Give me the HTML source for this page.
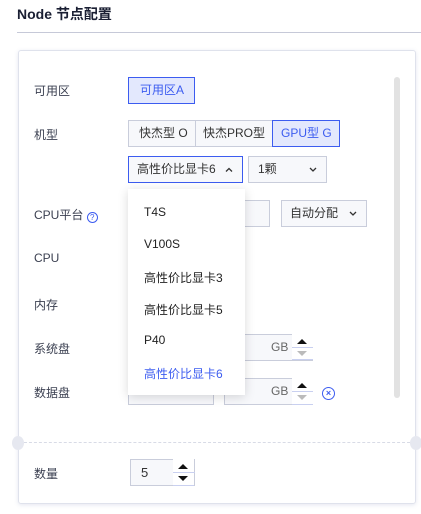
<!DOCTYPE html>
<html><head><meta charset="utf-8"><style>
*{box-sizing:border-box;margin:0;padding:0}
body{width:421px;height:514px;background:#fff;font-family:"Liberation Sans","Noto Sans CJK SC",sans-serif;font-size:12px;color:#333;position:relative;overflow:hidden}
.a{position:absolute}
.lbl{position:absolute;left:34px;font-size:12px;color:#3a3f50}
.box{position:absolute;border:1px solid #c9cddb;background:#f7f8fb;height:27px;line-height:25px;padding-left:10px;color:#333}
.sel{border-color:#3c5cf0;background:#e3e8fd;color:#3c5cf0}
.item{position:absolute;left:16px;font-size:12px;color:#222}
.spin{position:absolute;width:21px;background:#fff;border-bottom:1px solid #c9d0f0}
.chev{position:absolute;right:9px;top:10px}
</style></head><body>
<div class="a" style="left:17px;top:4px;font-size:14px;font-weight:bold;color:#1a1f33">Node 节点配置</div>
<div class="a" style="left:17px;top:32px;width:404px;height:1px;background:#c6c9d8"></div>
<div class="a" style="left:18px;top:50px;width:398px;height:454px;border:1px solid #dfe2ec;border-radius:3px;box-shadow:0 1px 4px rgba(120,130,180,.2)"></div>
<div class="a" style="left:394px;top:77px;width:6px;height:321px;background:#e2e2e2;border-radius:3px"></div>
<div class="lbl" style="top:82px">可用区</div>
<div class="lbl" style="top:126px">机型</div>
<div class="lbl" style="top:206px">CPU平台 <span style="display:inline-block;width:11px;height:11px;border:1px solid #3c5cf0;border-radius:50%;font-size:8px;line-height:9px;text-align:center;color:#3c5cf0;vertical-align:-1px">?</span></div>
<div class="lbl" style="top:251px">CPU</div>
<div class="lbl" style="top:296px">内存</div>
<div class="lbl" style="top:340px">系统盘</div>
<div class="lbl" style="top:384px">数据盘</div>
<div class="box sel" style="left:128px;top:77px;width:67px;padding-left:11px">可用区A</div>
<div class="box" style="left:128px;top:120px;width:68px">快杰型 O</div>
<div class="box" style="left:195px;top:120px;width:78px;padding-left:7px">快杰PRO型</div>
<div class="box sel" style="left:272px;top:120px;width:68px;padding-left:8px">GPU型 G</div>
<div class="box" style="left:128px;top:156px;width:115px;border-color:#3c5cf0;padding-left:8px">高性价比显卡6 <svg class="chev" width="8" height="5"><path d="M1 4.5L4 1.5L7 4.5" stroke="#333" stroke-width="1.3" fill="none"/></svg></div>
<div class="box" style="left:248px;top:156px;width:79px;padding-left:9px">1颗<svg class="chev" width="8" height="5"><path d="M1 1L4 4L7 1" stroke="#333" stroke-width="1.3" fill="none"/></svg></div>
<div class="box" style="left:224px;top:200px;width:46px"></div>
<div class="box" style="left:281px;top:200px;width:86px;padding-left:8px">自动分配<svg class="chev" width="8" height="5"><path d="M1 1L4 4L7 1" stroke="#333" stroke-width="1.3" fill="none"/></svg></div>
<div class="box" style="left:224px;top:334px;width:89px;color:#666"><span style="position:absolute;left:46px">GB</span></div>
<div class="spin" style="left:292px;top:334px;height:26px"><div style="position:absolute;left:5px;top:5px;border:5px solid transparent;border-bottom:5px solid #111;border-top:0"></div><div style="position:absolute;left:0;top:13px;width:21px;height:1px;background:#c9d0f0"></div><div style="position:absolute;left:5px;top:17px;border:5px solid transparent;border-top:5px solid #bbb;border-bottom:0"></div></div>
<div class="box" style="left:128px;top:378px;width:86px"></div>
<div class="box" style="left:224px;top:378px;width:89px;color:#666"><span style="position:absolute;left:46px">GB</span></div>
<div class="spin" style="left:292px;top:378px;height:27px"><div style="position:absolute;left:5px;top:5px;border:5px solid transparent;border-bottom:5px solid #111;border-top:0"></div><div style="position:absolute;left:0;top:13px;width:21px;height:1px;background:#c9d0f0"></div><div style="position:absolute;left:5px;top:17px;border:5px solid transparent;border-top:5px solid #bbb;border-bottom:0"></div></div>
<div class="a" style="left:322px;top:387px;width:13px;height:13px;border:1.5px solid #3c5cf0;border-radius:50%;color:#3c5cf0;font-size:9px;line-height:10px;text-align:center;font-weight:bold">×</div>
<div class="a" style="left:128px;top:189px;width:117px;height:206px;background:#fff;box-shadow:0 2px 10px rgba(0,0,0,.15)">
<div class="item" style="top:16px">T4S</div>
<div class="item" style="top:48px">V100S</div>
<div class="item" style="top:80px">高性价比显卡3</div>
<div class="item" style="top:112px">高性价比显卡5</div>
<div class="item" style="top:144px">P40</div>
<div class="item" style="top:176px;color:#3c5cf0">高性价比显卡6</div>
</div>
<div class="a" style="left:19px;top:442px;width:396px;border-top:1px dashed #d8dbe6"></div>
<div class="a" style="left:12px;top:436px;width:12px;height:14px;border-radius:50%;background:#e6e8f0"></div>
<div class="a" style="left:410px;top:436px;width:12px;height:14px;border-radius:50%;background:#e6e8f0"></div>
<div class="lbl" style="top:465px">数量</div>
<div class="box" style="left:130px;top:459px;width:65px;font-size:13px">5</div>
<div class="spin" style="left:173px;top:459px;height:27px"><div style="position:absolute;left:5px;top:5px;border:5px solid transparent;border-bottom:5px solid #111;border-top:0"></div><div style="position:absolute;left:0;top:13px;width:22px;height:1px;background:#c9d0f0"></div><div style="position:absolute;left:5px;top:17px;border:5px solid transparent;border-top:5px solid #111;border-bottom:0"></div></div>
</body></html>
